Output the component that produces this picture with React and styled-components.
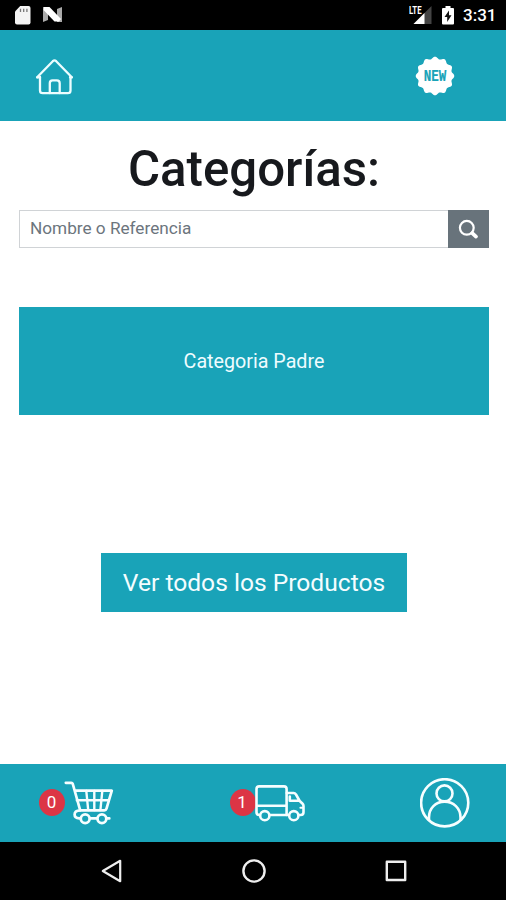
import React from "react";
import styled, { createGlobalStyle } from "styled-components";

const TEAL = "#19a3b8";

const GlobalStyle = createGlobalStyle`
  *, *::before, *::after { box-sizing: border-box; }
  body { margin: 0; background: #fff; font-family: Roboto, sans-serif; }
  svg { display: block; flex: none; }
`;

const Screen = styled.div`
  width: 506px;
  height: 900px;
  display: flex;
  flex-direction: column;
  overflow: hidden;
  background: #fff;
`;

const StatusBar = styled.div`
  height: 30px;
  flex: none;
  display: flex;
  align-items: center;
  justify-content: space-between;
  padding: 0 10px 0 15px;
  background: #000;
`;

const StatusGroup = styled.div`
  display: flex;
  align-items: center;
  gap: ${(p) => p.$gap}px;
`;

const Clock = styled.span`
  width: 33px;
  font-size: 17px;
  line-height: 28px;
  font-weight: 500;
  color: #fff;
  white-space: nowrap;
`;

const Header = styled.header`
  height: 91px;
  flex: none;
  display: flex;
  align-items: center;
  justify-content: space-between;
  padding: 1px 51px 0 34px;
  background: ${TEAL};
`;

const Main = styled.main`
  flex: 1;
  display: flex;
  flex-direction: column;
  align-items: center;
  padding: 18px 17px 0 19px;
`;

const Title = styled.h1`
  margin: 0;
  height: 71px;
  font-size: 49.2px;
  line-height: 61px;
  font-weight: 500;
  color: #17191d;
  white-space: nowrap;
`;

const SearchForm = styled.form`
  width: 100%;
  height: 38px;
  display: flex;
  margin-bottom: 59px;
`;

const SearchInput = styled.input`
  flex: 1;
  min-width: 0;
  border: 1px solid #d0d3d6;
  border-right: 0;
  border-radius: 0;
  padding: 0 10px 2px;
  font: 400 17.2px Roboto, sans-serif;
  background: #fff;
  outline: none;
  &::placeholder { color: #6c757d; opacity: 1; }
`;

const SearchButton = styled.button`
  width: 41px;
  border: 0;
  padding: 0;
  display: flex;
  align-items: center;
  justify-content: center;
  background: #68737b;
`;

const CategoryCard = styled.button`
  width: 100%;
  height: 108px;
  border: 0;
  padding: 1px 0 0;
  background: ${TEAL};
  color: #eefcff;
  font: 400 19.7px Roboto, sans-serif;
`;

const AllProductsButton = styled.button`
  width: 306px;
  height: 59px;
  margin-top: 138px;
  border: 0;
  padding: 0;
  background: ${TEAL};
  color: #f4fdff;
  font: 400 24.6px Roboto, sans-serif;
  white-space: nowrap;
`;

const Footer = styled.footer`
  height: 78px;
  flex: none;
  display: flex;
  align-items: center;
  justify-content: space-between;
  padding: 0 36px 0 39px;
  background: ${TEAL};
`;

const FooterItem = styled.div`
  display: flex;
  align-items: center;
`;

const Count = styled.span`
  width: 26px;
  height: 27px;
  border-radius: 50%;
  display: flex;
  align-items: center;
  justify-content: center;
  background: #dc3545;
  color: #fff;
  font-size: 17px;
  line-height: 27px;
  padding: 0 1px 1px 0;
  margin: 0 -1px 1px 0;
`;

const NavBar = styled.nav`
  height: 58px;
  flex: none;
  display: flex;
  align-items: center;
  justify-content: space-between;
  padding: 0 98px 0 100px;
  background: #000;
`;

const SdCardIcon = () => (
  <svg width="16" height="19" viewBox="0 0 16 19">
    <path d="M5.2 0H13.5Q15.5 0 15.5 2V16.5Q15.5 18.5 13.5 18.5H2Q0 18.5 0 16.5V5.4Z" fill="#f4f4f4" />
    <path d="M5.5 2.7V6M8.7 2.7V6M11.9 2.7V6" stroke="#777" strokeWidth="1.3" />
  </svg>
);

const NougatIcon = () => (
  <svg width="19" height="16" viewBox="0 0 19 16">
    <path d="M0 0H5V13L0 15ZM14 2L19 0V15H14Z" fill="#aaa" />
    <path d="M1 0H6.5L18 12L16 14.5H11.5L0.5 3Z" fill="#fff" />
  </svg>
);

const SignalIcon = () => (
  <svg width="24" height="20" viewBox="0 0 24 20">
    <path d="M22.5 1V19H4.5Z" fill="#444" />
    <path d="M15.5 8V19H4.5Z" fill="#fff" />
    <text x="0" y="9" fill="#fff" fontFamily="Roboto, sans-serif" fontWeight="700" fontSize="10" textLength="12.5" lengthAdjust="spacingAndGlyphs">LTE</text>
  </svg>
);

const BatteryIcon = () => (
  <svg width="12" height="19" viewBox="0 0 12 19">
    <path d="M3.5 0H8.5V2H11Q12 2 12 3V17.5Q12 18.5 11 18.5H1Q0 18.5 0 17.5V3Q0 2 1 2H3.5Z" fill="#fff" />
    <path d="M7 4.5L2.5 11H5.2V16L9.5 9.3H7Z" fill="#111" />
  </svg>
);

const HomeIcon = () => (
  <svg width="41" height="40" viewBox="0 -1 41 40" fill="none" stroke="#ecfdff" strokeWidth="2.3" strokeLinecap="round" strokeLinejoin="round">
    <path d="M6 20V33.5Q6 36.2 8.7 36.2H33.8Q36.5 36.2 36.5 33.5V20" />
    <path d="M3.2 20.3L18.8 4.2Q20.5 2.6 22.2 4.2L37.8 20.3" />
    <path d="M3.2 20.3L6 20.3M37.8 20.3H36" />
    <path d="M15.8 36V26.2Q15.8 23.4 18.5 23.4H22.9Q25.7 23.4 25.7 26.2V36" />
  </svg>
);

// Scalloped outline with twelve soft lobes around (20, 20).
const BADGE_POINTS = Array.from({ length: 144 }, (_, i) => {
  const a = (i * Math.PI) / 72;
  const r = 18.2 + 1.1 * Math.cos(12 * a);
  return `${(20 + r * Math.sin(a)).toFixed(2)},${(20 - r * Math.cos(a)).toFixed(2)}`;
}).join(" ");

const NewBadgeIcon = () => (
  <svg width="40" height="40" viewBox="0 0 40 40">
    <polygon points={BADGE_POINTS} fill="#fff" />
    <text x="8.7" y="24.8" fill={TEAL} stroke={TEAL} strokeWidth="0.2" fontFamily="Liberation Mono, monospace" fontWeight="700" fontSize="16" textLength="22.6" lengthAdjust="spacingAndGlyphs">NEW</text>
  </svg>
);

const SearchIcon = () => (
  <svg width="21" height="21" viewBox="0 0 21 21" fill="none" stroke="#fff" strokeLinecap="round">
    <circle cx="8.8" cy="8.8" r="6.9" strokeWidth="2.2" />
    <path d="M14.2 14.2L18 17.6" strokeWidth="3.8" />
  </svg>
);

const CartIcon = () => (
  <svg width="50" height="46" viewBox="0 0 50 46" fill="none" stroke="#f6feff" strokeWidth="2.7" strokeLinecap="round" strokeLinejoin="round">
    <path d="M1.8 2.8H7.3Q8.4 2.8 8.8 4L16.2 30.3H40.3Q42 30.3 42.5 28.6L47.8 10.7H11" />
    <path d="M12.8 20.2H44.8M22.3 11L24.2 30M30.3 11V30M38.3 11L36.4 30" strokeWidth="2.4" />
    <path d="M16 30.5Q10.6 30.5 10.6 34.6Q10.6 38.4 15.2 38.4H17M25.5 38.4H33.7M42 38.4H45.3" />
    <circle cx="21.2" cy="38.8" r="4.4" fill={TEAL} />
    <circle cx="37.9" cy="38.8" r="4.4" fill={TEAL} />
  </svg>
);

const TruckIcon = () => (
  <svg width="50" height="46" viewBox="0 0 50 46" fill="none" stroke="#f6feff" strokeWidth="2.6" strokeLinecap="round" strokeLinejoin="round">
    <path d="M5 35H4.2Q1.5 35 1.5 32.3V9.1Q1.5 6.4 4.2 6.4H28.9Q31.6 6.4 31.6 9.1V35H14M1.7 25.8H31" />
    <path d="M31.8 13H38.6Q40 13 41 14.5L44.7 21L47.4 23.5Q48.5 24.5 48.5 26V32.3Q48.5 35 45.8 35H43.8M33.7 35H31.8M44.3 20.7H34.8V16.6" />
    <path d="M48 27.8H45.4" strokeWidth="2" />
    <circle cx="9.8" cy="35.7" r="4.6" fill={TEAL} />
    <circle cx="38.8" cy="35.7" r="4.6" fill={TEAL} />
  </svg>
);

const UserIcon = () => (
  <svg width="50" height="50" viewBox="0 0 50 50" fill="none" stroke="#f6feff" strokeWidth="2.6">
    <circle cx="24.7" cy="24.8" r="23.6" />
    <circle cx="24.5" cy="15.4" r="8" />
    <path d="M9 42V39.3C9 30.3 15.6 23.6 24.6 23.6C33.6 23.6 40.5 30.3 40.5 39.3V42" />
  </svg>
);

const BackIcon = () => (
  <svg width="24" height="24" viewBox="0 0 24 24" fill="none" stroke="#eee" strokeWidth="2.2" strokeLinejoin="round">
    <path d="M2.8 12L20.2 1.8V22.2Z" />
  </svg>
);

const CircleIcon = () => (
  <svg width="24" height="24" viewBox="0 0 24 24" fill="none" stroke="#eee" strokeWidth="2.4">
    <circle cx="12" cy="12" r="10.6" />
  </svg>
);

const SquareIcon = () => (
  <svg width="24" height="24" viewBox="0 0 24 24" fill="none" stroke="#eee" strokeWidth="2.4" strokeLinejoin="round">
    <rect x="2.8" y="2.8" width="18.4" height="18.2" />
  </svg>
);

export default function App() {
  return (
    <Screen>
      <GlobalStyle />
      <StatusBar>
        <StatusGroup $gap={12}>
          <SdCardIcon />
          <NougatIcon />
        </StatusGroup>
        <StatusGroup $gap={9}>
          <SignalIcon />
          <BatteryIcon />
          <Clock>3:31</Clock>
        </StatusGroup>
      </StatusBar>
      <Header>
        <HomeIcon />
        <NewBadgeIcon />
      </Header>
      <Main>
        <Title>Categorías:</Title>
        <SearchForm>
          <SearchInput placeholder="Nombre o Referencia" />
          <SearchButton type="button" aria-label="Buscar">
            <SearchIcon />
          </SearchButton>
        </SearchForm>
        <CategoryCard>Categoria Padre</CategoryCard>
        <AllProductsButton>Ver todos los Productos</AllProductsButton>
      </Main>
      <Footer>
        <FooterItem>
          <Count>0</Count>
          <CartIcon />
        </FooterItem>
        <FooterItem>
          <Count>1</Count>
          <TruckIcon />
        </FooterItem>
        <FooterItem>
          <UserIcon />
        </FooterItem>
      </Footer>
      <NavBar>
        <BackIcon />
        <CircleIcon />
        <SquareIcon />
      </NavBar>
    </Screen>
  );
}
